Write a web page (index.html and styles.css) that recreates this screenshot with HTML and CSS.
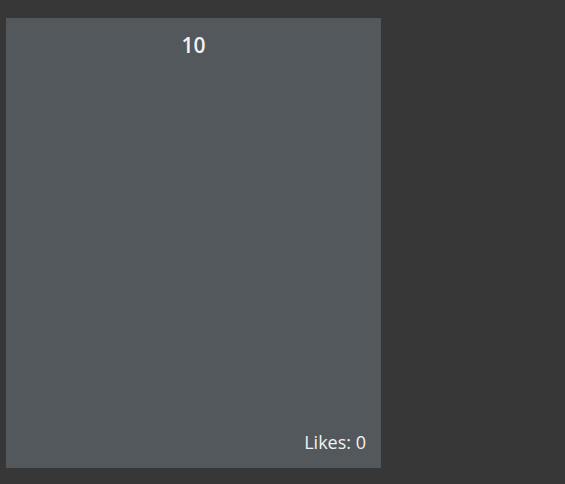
FILE: index.html
```html
<!DOCTYPE html>
<html>
<head>
<meta charset="utf-8">
<link rel="stylesheet" href="styles.css">
</head>
<body>
<div class="card">
  <div class="title">10</div>
  <div class="likes">Likes: 0</div>
</div>
</body>
</html>
```
FILE: styles.css
```css
html, body { margin: 0; padding: 0; background: #373737; }
body { padding: 18px 0 0 6px; font-family: "Open Sans", "Noto Sans", sans-serif; }
.card {
  width: 375px;
  height: 450px;
  background: #52585b;
  color: #f2f2f2;
  display: flex;
  flex-direction: column;
  justify-content: space-between;
  box-sizing: border-box;
  padding: 12px 15px 14px 15px;
}
.title { text-align: center; font-size: 21px; font-weight: 600; line-height: 30px; }
.likes { text-align: right; font-size: 18px; line-height: 24px; }
```
